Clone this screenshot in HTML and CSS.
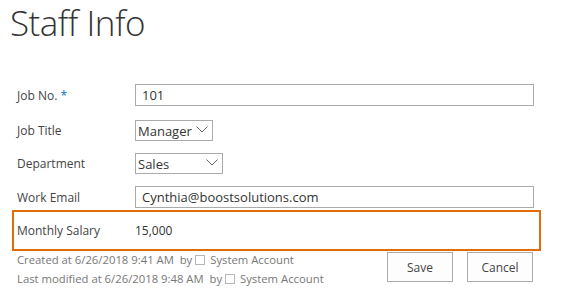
FILE: index.html
```html
<!DOCTYPE html>
<html>
<head>
<meta charset="utf-8">
<link rel="stylesheet" href="styles.css">
</head>
<body>
<div class="page">
  <h1 class="title">Staff Info</h1>
  <div class="form">
    <div class="row r1">
      <div class="label">Job No. <span class="req">*</span></div>
      <div class="input wide">101</div>
    </div>
    <div class="row r2">
      <div class="label">Job Title</div>
      <div class="select s-title"><span>Manager</span><svg class="chev" width="12" height="7" viewBox="0 0 12 7"><path d="M0.5 0.5 L6 6 L11.5 0.5" fill="none" stroke="#666" stroke-width="1"/></svg></div>
    </div>
    <div class="row r3">
      <div class="label">Department</div>
      <div class="select s-dept"><span>Sales</span><svg class="chev" width="12" height="7" viewBox="0 0 12 7"><path d="M0.5 0.5 L6 6 L11.5 0.5" fill="none" stroke="#666" stroke-width="1"/></svg></div>
    </div>
    <div class="row r4">
      <div class="label">Work Email</div>
      <div class="input wide">Cynthia@boostsolutions.com</div>
    </div>
    <div class="highlight">
      <div class="label">Monthly Salary</div>
      <div class="value">15,000</div>
    </div>
  </div>
  <div class="footer">
    <div class="meta">
      <div class="line">Created at 6/26/2018 9:41 AM&nbsp; by<span class="box"></span> System Account</div>
      <div class="line">Last modified at 6/26/2018 9:48 AM&nbsp; by<span class="box"></span> System Account</div>
    </div>
    <div class="buttons">
      <div class="btn">Save</div>
      <div class="btn">Cancel</div>
    </div>
  </div>
</div>
</body>
</html>
```
FILE: styles.css
```css
html, body {
  margin: 0;
  padding: 0;
  background: #fff;
}
body {
  font-family: "Open Sans", "Noto Sans", sans-serif;
  font-size: 12px;
  color: #333;
}
.page {
  width: 568px;
  height: 306px;
  overflow: hidden;
}
.title {
  margin: 0;
  padding: 0 0 0 10px;
  height: 46px;
  line-height: 46px;
  font-weight: 300;
  font-size: 35px;
  color: #333;
  letter-spacing: -0.5px;
}
.form {
  margin-top: 38px;
  display: flex;
  flex-direction: column;
}
.row {
  display: flex;
  align-items: center;
  padding-left: 17px;
}
.label {
  width: 118px;
  flex: none;
  color: #444;
}
.req {
  color: #0072c6;
}
.input {
  box-sizing: border-box;
  height: 22px;
  border: 1px solid #ababab;
  padding: 0 6px;
  line-height: 20px;
  color: #333;
  font-size: 13px;
}
.wide {
  width: 399px;
}
.r2 { margin-top: 14px; }
.r3 { margin-top: 12px; }
.r4 { margin-top: 12px; }
.select {
  box-sizing: border-box;
  height: 21px;
  border: 1px solid #ababab;
  display: flex;
  align-items: center;
  justify-content: space-between;
  padding: 0 4px 0 2px;
  color: #333;
  font-size: 13px;
}
.s-title { width: 78px; }
.s-dept { width: 88px; }
.chev {
  display: block;
  margin-top: -2px;
}
.highlight {
  box-sizing: border-box;
  margin-top: 2px;
  margin-left: 12px;
  width: 529px;
  height: 41px;
  border: 2px solid #e06c0a;
  display: flex;
  align-items: center;
  padding-left: 3px;
}
.value {
  color: #333;
}
.footer {
  display: flex;
  justify-content: space-between;
  padding-left: 17px;
  padding-right: 35px;
  margin-top: 1px;
}
.meta {
  color: #777;
  font-size: 11.3px;
  margin-top: -1px;
}
.line {
  height: 18.5px;
  line-height: 18.5px;
  display: flex;
  align-items: center;
  white-space: pre;
}
.box {
  display: inline-block;
  box-sizing: border-box;
  width: 10px;
  height: 10px;
  border: 1px solid #b8b8b8;
  margin: 0 2px 0 3px;
}
.buttons {
  display: flex;
  gap: 14px;
}
.btn {
  box-sizing: border-box;
  width: 66px;
  height: 30px;
  border: 1px solid #ababab;
  display: flex;
  align-items: center;
  justify-content: center;
  color: #444;
  background: #fdfdfd;
}
```
